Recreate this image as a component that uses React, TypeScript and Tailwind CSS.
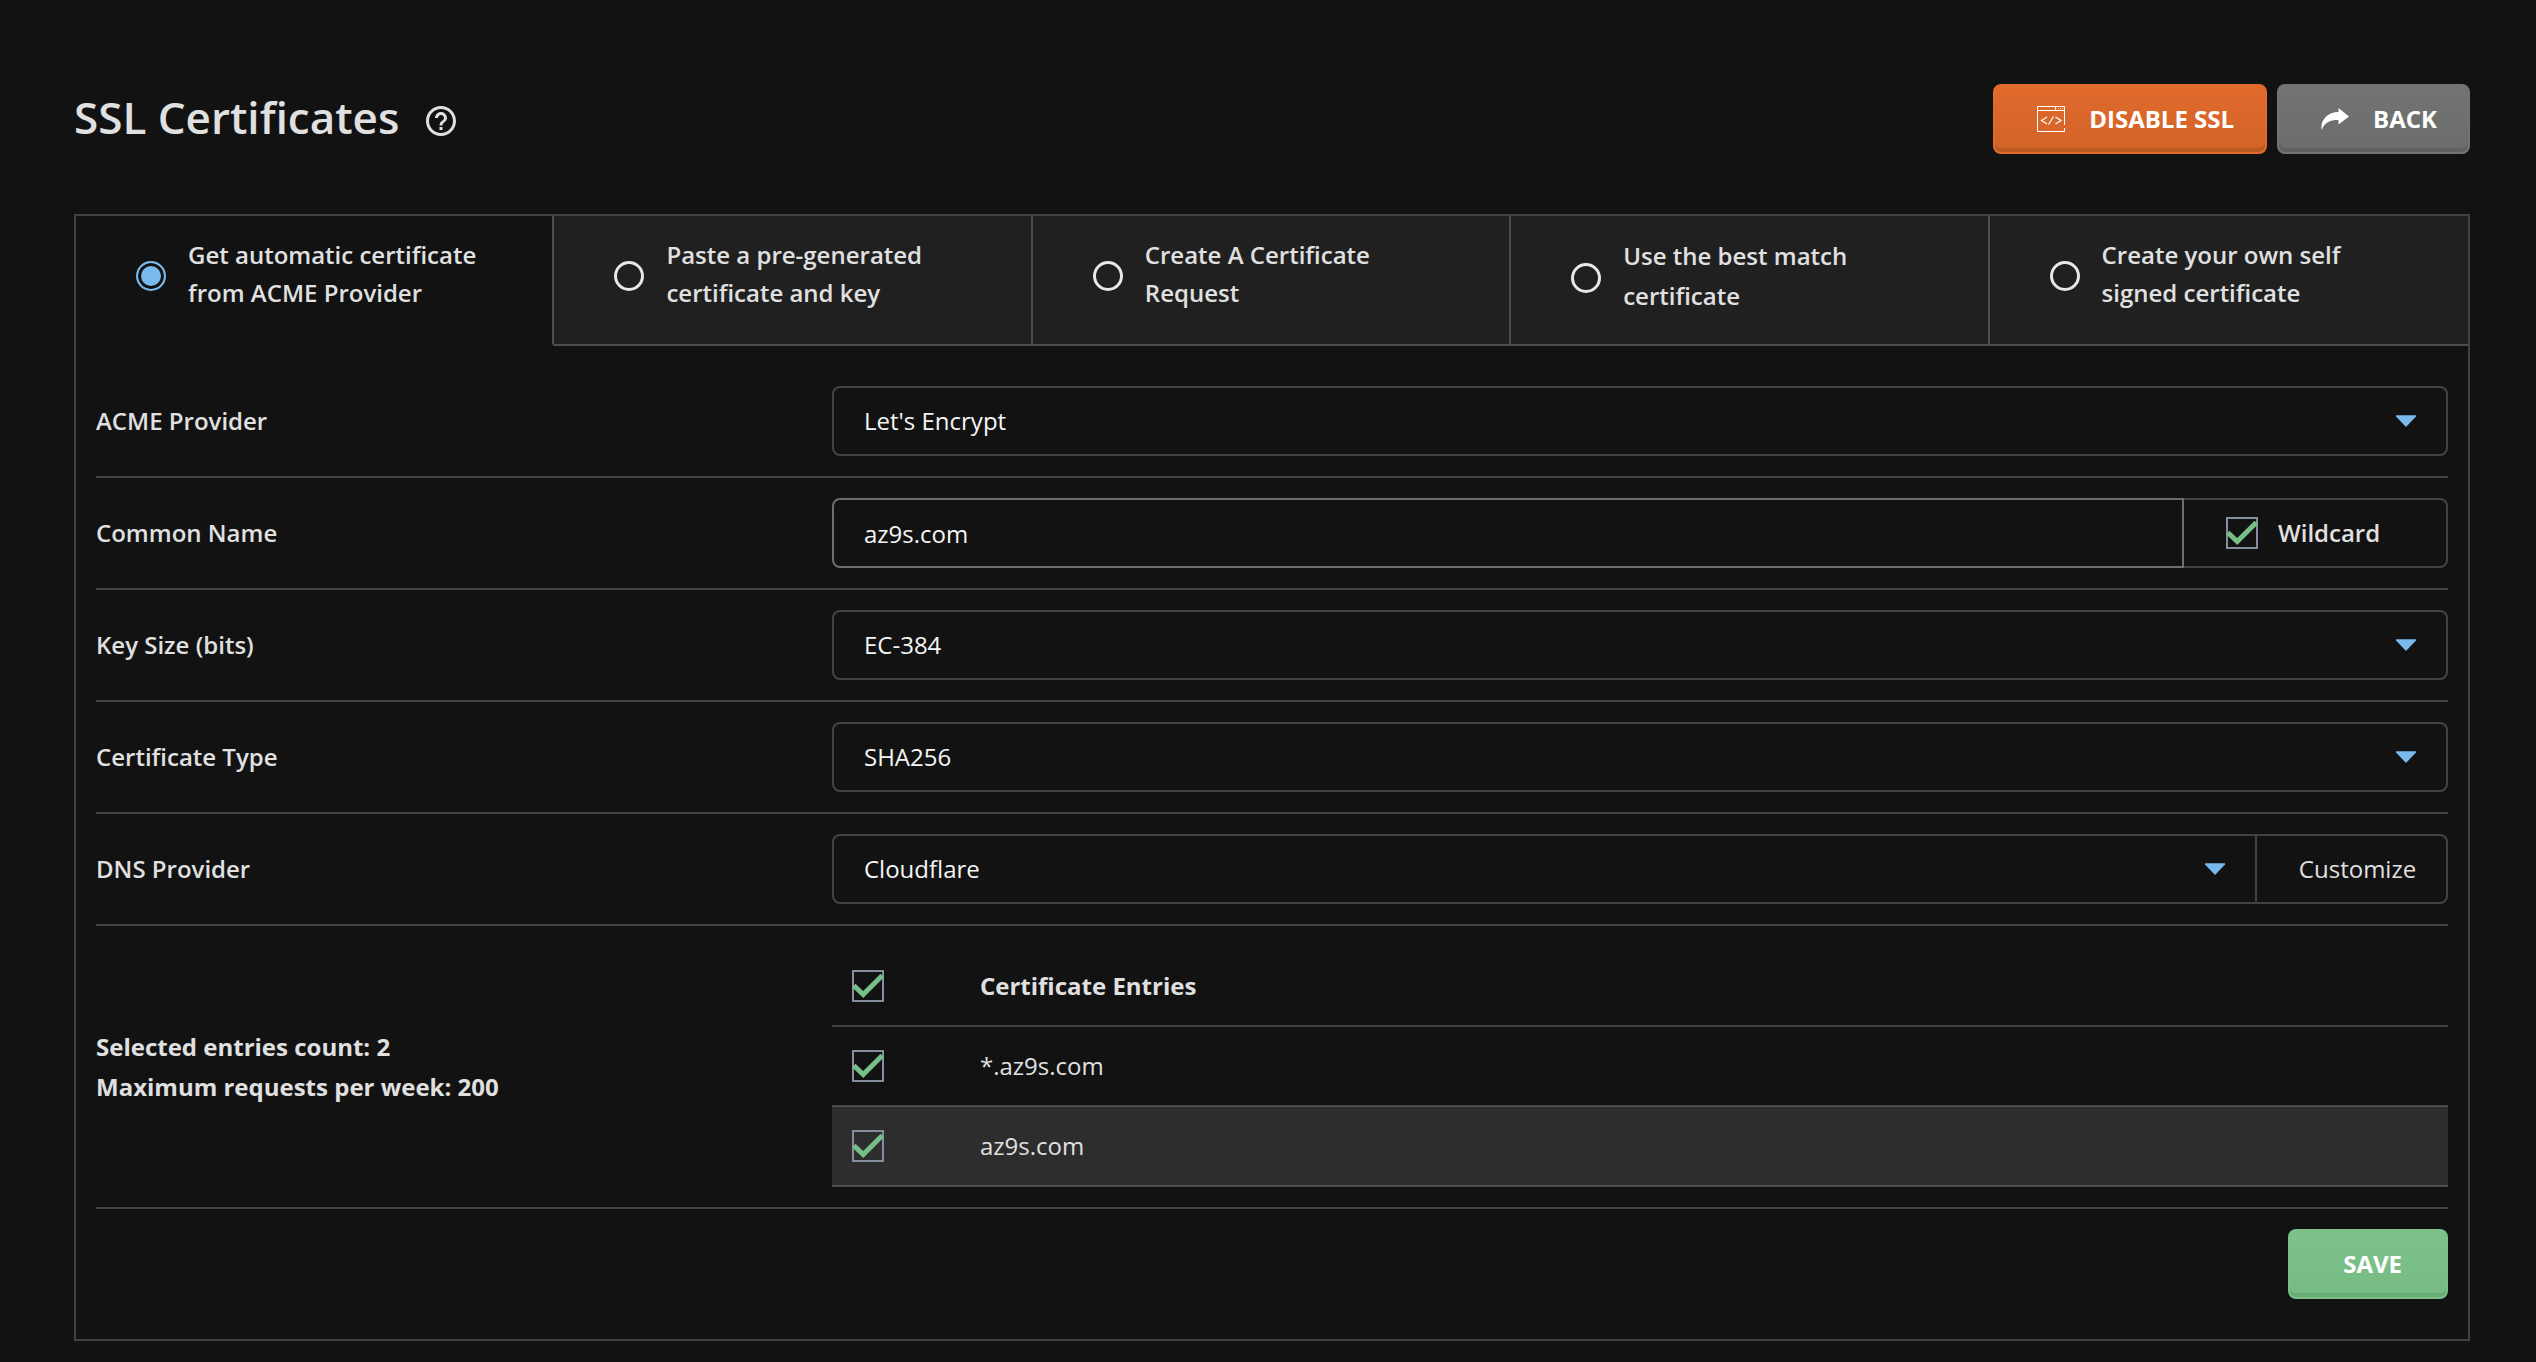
import { useState } from "react";
import type { ReactNode } from "react";
import { MdHelpOutline } from "react-icons/md";
import clsx from "clsx";

const METHODS = [
  { id: "acme", label: "Get automatic certificate from ACME Provider" },
  { id: "paste", label: "Paste a pre-generated certificate and key" },
  { id: "request", label: "Create A Certificate Request" },
  { id: "match", label: "Use the best match certificate", loose: true },
  { id: "self", label: "Create your own self signed certificate" },
];

const ENTRIES = ["*.az9s.com", "az9s.com"];

function CodeWindowIcon() {
  return (
    <svg width="28" height="26" viewBox="0 0 28 26" fill="none" stroke="currentColor" aria-hidden="true">
      <path d="M27.5 19V.5H.5v25h27V22" />
      <path d="M.5 4.5h27M18.5.5v4" />
      <path d="M21 2.5h1M23 2.5h1M25 2.5h1" strokeWidth="0.8" />
      <path d="M10 11l-5.500 3.500 5.500 3.500M18.500 11l5.500 3.500-5.500 3.500M16.500 10.500l-5 8" strokeWidth="1.200" />
    </svg>
  );
}

function ForwardArrowIcon() {
  return (
    <svg width="28" height="22" viewBox="0 0 28 22" fill="currentColor" aria-hidden="true">
      <path d="M17.500 0L28 8.500 17.500 16.500V12C10.500 11.800 4 13.500.6 22-.8 12.500 6 4.200 17.500 4.100z" />
    </svg>
  );
}

type ButtonProps = {
  tone: "orange" | "grey" | "green";
  icon?: ReactNode;
  type?: "button" | "submit";
  children: ReactNode;
};

function Button({ tone, icon, type = "button", children }: ButtonProps) {
  return (
    <button
      type={type}
      className={clsx(
        "flex h-[70px] items-center gap-6 rounded-lg border-2 text-2xl font-bold text-white uppercase",
        icon ? "pr-[31px] pl-[42px]" : "pr-11 pl-[53px]",
        tone === "orange" &&
          "border-[#e16a2c] bg-linear-to-b from-[#e16a2c] to-[#d26328] shadow-[inset_0_-4px_0_#bb5923]",
        tone === "grey" &&
          "border-[#727472] bg-linear-to-b from-[#727472] to-[#6b6d6b] shadow-[inset_0_-4px_0_#5f615f]",
        tone === "green" &&
          "border-[#7abf88] bg-linear-to-b from-[#7ec28b] to-[#75bb83] shadow-[inset_0_-4px_0_#66ad75]",
      )}
    >
      {icon}
      <span>{children}</span>
    </button>
  );
}

type CheckboxProps = {
  id: string;
  label?: string;
  checked: boolean;
  onChange: (checked: boolean) => void;
};

function Checkbox({ id, label, checked, onChange }: CheckboxProps) {
  return (
    <span className="relative block size-8 shrink-0">
      <input
        id={id}
        type="checkbox"
        aria-label={label}
        checked={checked}
        onChange={(e) => onChange(e.target.checked)}
        className="block size-8 appearance-none border-2 border-[#868da0]"
      />
      {checked && (
        <svg
          viewBox="0 0 32 32"
          className="pointer-events-none absolute inset-0 size-8"
          fill="none"
          stroke="#76bf85"
          strokeWidth="5"
          aria-hidden="true"
        >
          <path d="M1.800 15.500L11.200 24.500 30.300 5.500" />
        </svg>
      )}
    </span>
  );
}

function Select({ id, options, joined }: { id: string; options: string[]; joined?: boolean }) {
  return (
    <div className="relative min-w-0 flex-1">
      <select
        id={id}
        className={clsx(
          "h-[70px] w-full appearance-none border-2 border-[#424242] bg-[#121212] px-[30px] text-2xl text-[#f5f5f5]",
          joined ? "rounded-l-lg" : "rounded-lg",
        )}
      >
        {options.map((option) => (
          <option key={option}>{option}</option>
        ))}
      </select>
      <svg
        viewBox="0 0 20 12"
        className="pointer-events-none absolute top-[29px] right-8 h-3 w-5"
        fill="#78b9ee"
        aria-hidden="true"
      >
        <path d="M0 .3h20v1.200L10 12 0 1.500z" />
      </svg>
    </div>
  );
}

function Row({ label, htmlFor, children }: { label: string; htmlFor: string; children: ReactNode }) {
  return (
    <div className="grid grid-cols-[46fr_101fr] items-center border-b-2 border-[#424242] py-5">
      <label htmlFor={htmlFor} className="font-semibold">
        {label}
      </label>
      <div className="flex">{children}</div>
    </div>
  );
}

export default function App() {
  const [method, setMethod] = useState("acme");
  const [commonName, setCommonName] = useState("az9s.com");
  const [wildcard, setWildcard] = useState(true);
  const [selected, setSelected] = useState<string[]>(ENTRIES);

  function toggleEntry(name: string, on: boolean) {
    setSelected((prev) => (on ? [...prev, name] : prev.filter((n) => n !== name)));
  }

  return (
    <main className="min-h-screen bg-[#121212] pt-[84px] pr-[66px] pb-5 pl-[74px] font-['Open_Sans',sans-serif] text-2xl text-[#e0e0e0]">
      <header className="flex items-start justify-between">
        <div className="flex items-center gap-6">
          <h1 className="text-[44px] leading-[66px] font-semibold">SSL Certificates</h1>
          <button type="button" aria-label="Help" className="mt-2">
            <MdHelpOutline size={36} />
          </button>
        </div>
        <div className="flex gap-[10px]">
          <Button tone="orange" icon={<CodeWindowIcon />}>
            Disable SSL
          </Button>
          <Button tone="grey" icon={<ForwardArrowIcon />}>
            Back
          </Button>
        </div>
      </header>

      <form className="mt-[60px] border-2 border-[#424242]" onSubmit={(e) => e.preventDefault()}>
        <div className="grid grid-cols-5" role="radiogroup" aria-label="Certificate source">
          {METHODS.map((m) => (
            <label
              key={m.id}
              className={clsx(
                "flex h-[130px] items-start border-r-2 border-b-2 border-[#4d4d4d] pt-5 pr-14 pl-[60px] font-semibold last:border-r-0",
                m.id === method ? "border-b-transparent" : "bg-[#202020]",
              )}
            >
              <span className="flex items-center gap-[22px]">
                <input
                  type="radio"
                  name="method"
                  value={m.id}
                  checked={m.id === method}
                  onChange={() => setMethod(m.id)}
                  className="mt-1 size-[30px] shrink-0 appearance-none rounded-full border-3 border-[#e8e8e8] checked:border-2 checked:border-[#78b9ee] checked:bg-[#78b9ee] checked:shadow-[inset_0_0_0_3px_#121212]"
                />
                <span className={m.loose ? "leading-10" : "leading-[38px]"}>{m.label}</span>
              </span>
            </label>
          ))}
        </div>

        <div className="px-5 pt-5 pb-10">
          <Row label="ACME Provider" htmlFor="provider">
            <Select id="provider" options={["Let's Encrypt", "ZeroSSL"]} />
          </Row>
          <Row label="Common Name" htmlFor="common-name">
            <input
              id="common-name"
              type="text"
              value={commonName}
              onChange={(e) => setCommonName(e.target.value)}
              className="h-[70px] min-w-0 flex-1 rounded-l-lg border-2 border-[#6e6e6e] bg-[#121212] px-[30px] text-[#f5f5f5]"
            />
            <div className="flex h-[70px] w-[264px] items-center gap-5 rounded-r-lg border-y-2 border-r-2 border-[#424242] pl-[42px]">
              <Checkbox id="wildcard" checked={wildcard} onChange={setWildcard} />
              <label htmlFor="wildcard" className="font-semibold">
                Wildcard
              </label>
            </div>
          </Row>
          <Row label="Key Size (bits)" htmlFor="key-size">
            <Select id="key-size" options={["EC-384", "EC-256", "2048", "4096"]} />
          </Row>
          <Row label="Certificate Type" htmlFor="cert-type">
            <Select id="cert-type" options={["SHA256"]} />
          </Row>
          <Row label="DNS Provider" htmlFor="dns-provider">
            <Select id="dns-provider" options={["Cloudflare", "Local"]} joined />
            <button
              type="button"
              className="h-[70px] w-[191px] rounded-r-lg border-y-2 border-r-2 border-[#424242] pl-3"
            >
              Customize
            </button>
          </Row>

          <div className="grid grid-cols-[46fr_101fr] items-center border-b-2 border-[#424242] py-5">
            <div className="leading-10 font-bold">
              <p>Selected entries count: {selected.length}</p>
              <p>Maximum requests per week: 200</p>
            </div>
            <table className="w-full border-collapse">
              <thead>
                <tr className="h-20 border-b-2 border-white/20">
                  <th className="w-32 pl-5">
                    <Checkbox
                      id="entries-all"
                      label="Select all entries"
                      checked={selected.length === ENTRIES.length}
                      onChange={(on) => setSelected(on ? ENTRIES : [])}
                    />
                  </th>
                  <th className="pl-5 text-left font-bold">Certificate Entries</th>
                </tr>
              </thead>
              <tbody>
                {ENTRIES.map((name) => (
                  <tr key={name} className="h-20 border-b-2 border-white/20 even:bg-[#2d2d2d]">
                    <td className="pl-5">
                      <Checkbox
                        id={`entry-${name}`}
                        checked={selected.includes(name)}
                        onChange={(on) => toggleEntry(name, on)}
                      />
                    </td>
                    <td className="pl-5">
                      <label htmlFor={`entry-${name}`}>{name}</label>
                    </td>
                  </tr>
                ))}
              </tbody>
            </table>
          </div>

          <div className="flex justify-end pt-5">
            <Button tone="green" type="submit">
              Save
            </Button>
          </div>
        </div>
      </form>
    </main>
  );
}
